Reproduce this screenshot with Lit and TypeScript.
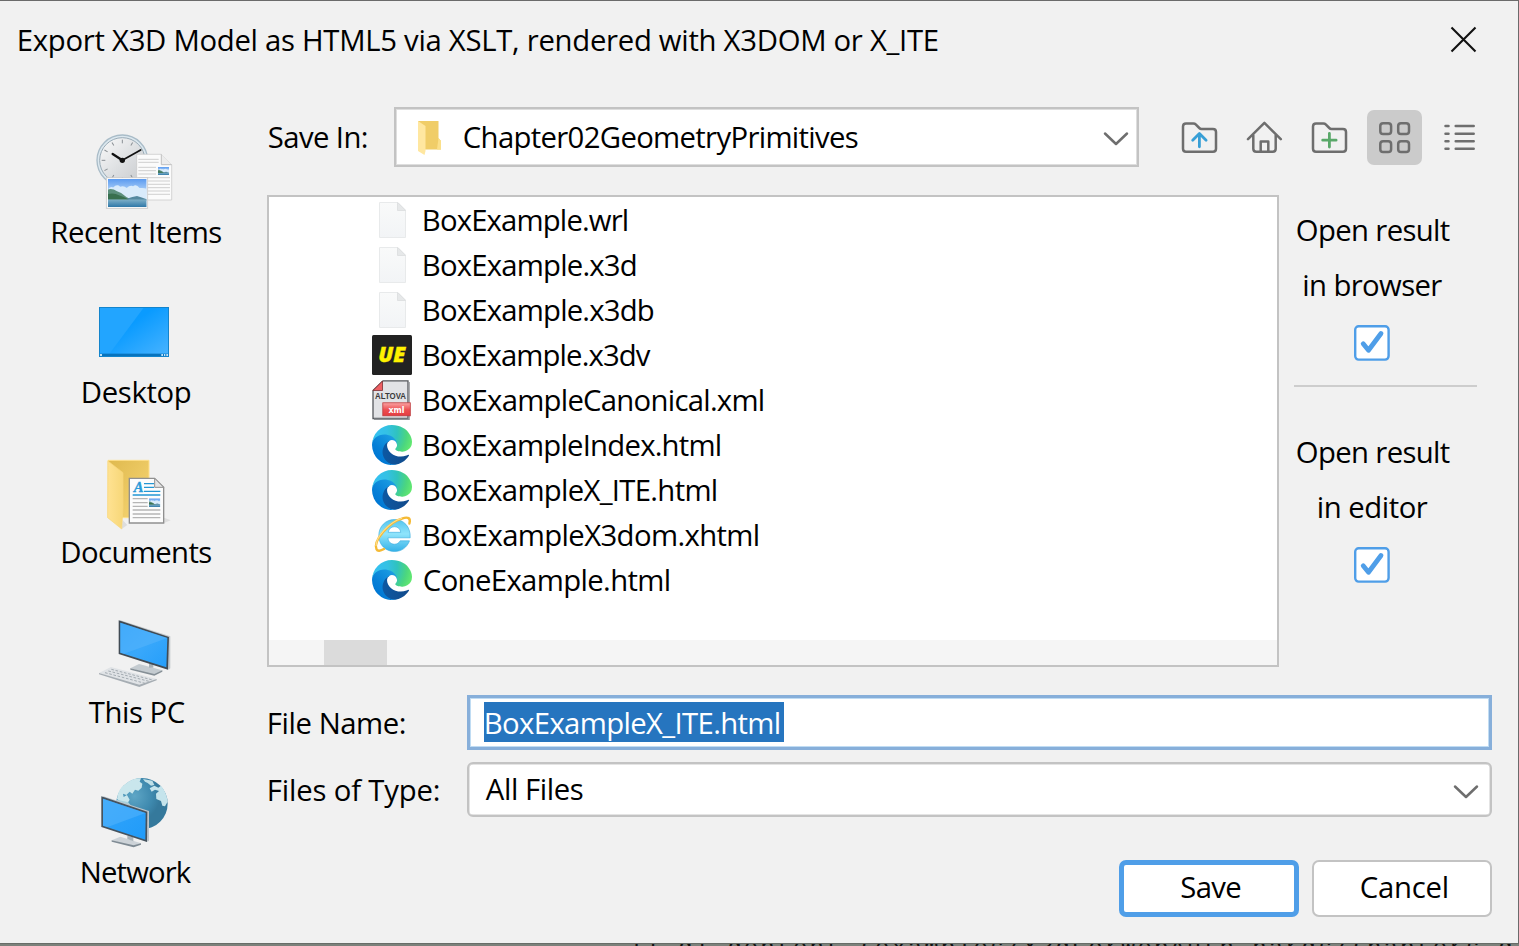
import { LitElement, html, css, svg } from "lit";
import { customElement, property } from "lit/decorators.js";

/** One line of text whose glyphs are spread over a given ink width. */
@customElement("fit-text")
class FitText extends LitElement {
  @property() text = "";
  @property({ type: Number }) w = 100;
  @property({ type: Number }) size = 29.3;
  static styles = css`
    :host { display: inline-block; flex: none; white-space: pre; text-align: left; }
    .run { display: block; white-space: pre; }
  `;
  render() {
    const ctx = document.createElement("canvas").getContext("2d")!;
    ctx.font = `${this.size}px "Open Sans"`;
    const m = ctx.measureText(this.text);
    const ink = m.actualBoundingBoxRight + m.actualBoundingBoxLeft;
    const gap = (this.w - ink) / (this.text.length - 1);
    return html`<span
      class="run"
      style="width:${this.w}px;font-size:${this.size}px;letter-spacing:${gap.toFixed(3)}px;text-indent:${(m.actualBoundingBoxLeft + 0.8).toFixed(2)}px"
      >${this.text}</span>`;
  }
}

const photo = (x: number, y: number, w: number, h: number) => svg`
  <svg x=${x} y=${y} width=${w} height=${h} viewBox="0 0 120 86" preserveAspectRatio="none">
    <defs><linearGradient id="sky" x2="0" y2="1"><stop offset="0" stop-color="#5b9bf0"/><stop offset=".6" stop-color="#cfe6fb"/></linearGradient>
    <linearGradient id="sea" x2="0" y2="1"><stop offset="0" stop-color="#7fb0c8"/><stop offset="1" stop-color="#2f78a8"/></linearGradient></defs>
    <rect width="120" height="86" fill="url(#sky)"/>
    <path d="M0 32Q8 22 16 26Q28 14 38 24Q50 20 58 28Q68 18 78 22Q88 14 98 28Q110 26 120 30V62H0Z" fill="#d9ebfb"/>
    <path d="M0 32Q14 28 28 38Q44 42 58 56L75 64H0Z" fill="#5c8f7c"/>
    <path d="M60 60Q76 54 90 52Q104 56 120 62V66H50Z" fill="#5589a0"/>
    <path d="M0 46Q20 42 34 50Q48 54 66 64H0Z" fill="#39704f"/>
    <rect y="63" width="120" height="23" fill="url(#sea)"/>
  </svg>`;

const recent = svg`
  <defs><linearGradient id="face" x2="1" y2="1"><stop offset="0" stop-color="#fafafa"/><stop offset=".5" stop-color="#dfe1e3"/><stop offset="1" stop-color="#c6c9cc"/></linearGradient></defs>
  <g transform="translate(-1 0) scale(.3333)">
    <circle cx="127" cy="121" r="76" fill="#dce8ef" stroke="#a9bcc8" stroke-width="4"/>
    <circle cx="127" cy="121" r="68" fill="url(#face)" stroke="#9aabb6" stroke-width="3"/>
    ${[0, 30, 60, 90, 120, 150, 180, 210, 240, 270, 300, 330].map(
      (a) => svg`<path d="M127 59V70" stroke="#8b9095" stroke-width="3" transform="rotate(${a} 127 121)"/>`
    )}
    <path d="M127 121L182 90" stroke="#111" stroke-width="5" stroke-linecap="round"/>
    <path d="M127 121L98 102" stroke="#111" stroke-width="7" stroke-linecap="round"/>
    <circle cx="127" cy="121" r="8" fill="#111"/>
    <path d="M170 103H244L275 134V240H170Z" fill="#fbfbfb" stroke="#c5c5c5" stroke-width="2"/>
    <path d="M244 103V134H275" fill="#ececec" stroke="#bfbfbf" stroke-width="3"/>
    <path d="M175 118H236M175 127H236M175 142H228M175 152H228M175 162H228M175 173H270M175 183H270M175 193H270M175 203H270M175 213H270M175 223H270" stroke="#cfcfcf" stroke-width="3"/>
    ${photo(234, 141, 33, 24)}
    <rect x="79" y="173" width="124" height="92" fill="#fafafa" stroke="#cacaca" stroke-width="2.500"/>
    ${photo(84, 177, 116, 84)}
  </g>`;

const desktop = svg`
  <defs><linearGradient id="dk" x2="1" y2="1"><stop offset=".4" stop-color="#0a9bff"/><stop offset="1" stop-color="#4ab4ff"/></linearGradient></defs>
  <g transform="translate(-1 10) scale(.3333)">
    <rect x="58" y="52" width="208" height="148" fill="url(#dk)"/>
    <path d="M58 52H192L88 192H58Z" fill="#22a5ff"/>
    <rect x="58" y="191" width="208" height="9" fill="#0873bd"/>
    <path d="M60 195h6M244 195h5M252 195h4M259 195h5" stroke="#bfe2f8" stroke-width="6"/>
    <rect x="58.500" y="52.500" width="207" height="147" fill="none" stroke="#1384cc" stroke-width="3"/>
  </g>`;

const documents = svg`
  <defs><linearGradient id="fb" x2="1" y2="1"><stop offset="0" stop-color="#dfb94e"/><stop offset="1" stop-color="#f8d775"/></linearGradient>
  <linearGradient id="ff" x2="1" y2="0"><stop offset="0" stop-color="#ffe292"/><stop offset="1" stop-color="#f7d778"/></linearGradient></defs>
  <g transform="translate(9 5) scale(.3333)">
    <path d="M95 252L112 240L98 225Z" fill="#ddd"/><path d="M222 234L242 226L222 218Z" fill="#ddd"/>
    <path d="M54 46H177V218H97L54 218Z" fill="url(#fb)" stroke="#ffe08a" stroke-width="3"/>
    <path d="M54 48L99 83V190L95 252L53 218Z" fill="url(#ff)" stroke="#f8d67b" stroke-width="2"/>
    <path d="M118 100H194L221 127V234H118Z" fill="#fcfcfc" stroke="#909090" stroke-width="4"/>
    <path d="M194 100V127H221Z" fill="#e5e5e5" stroke="#909090" stroke-width="3"/>
    <text x="131" y="140" font-family="Liberation Serif" font-size="44" font-weight="700" font-style="italic" fill="#2a9ad8" stroke="#2a9ad8">A</text>
    <path d="M162 116H192M162 127H192M162 139H211M128 150H211" stroke="#2396d3" stroke-width="4"/>
    <path d="M128 161H173M128 173H173M128 184H173M128 195H211M128 207H211M128 218H211" stroke="#b5b5b5" stroke-width="4"/>
    ${photo(177, 160, 34, 26)}
  </g>`;

const pc = svg`
  <defs><linearGradient id="scr" x2="1" y2="1"><stop offset="0" stop-color="#29a0fa"/><stop offset=".5" stop-color="#39a8fb"/><stop offset="1" stop-color="#259efa"/></linearGradient></defs>
  <g transform="translate(4 5) scale(.3333)">
    <path d="M136 190L162 177L232 196L208 210Z" fill="#c4cbd0"/><path d="M136 190L208 207L232 196V200L208 212L136 194Z" fill="#858f96"/>
    <path d="M192 176H205V188H192Z" fill="#a8b1b7"/>
    <path d="M104 45L256 94V190L250 194Z" fill="#c3c9cd"/>
    <path d="M101 46L252 96L249 194L101 147Z" fill="#414b54"/>
    <path d="M106 53L247 99L244 187L106 143Z" fill="url(#scr)"/>
    <path d="M106 53L247 99L117 146L106 143Z" fill="#57b5fb" opacity=".55"/>
    <path d="M42 204L78 186L215 222L163 243Z" fill="#e0e3e6"/><path d="M42 204L163 239L215 222V226L163 246L42 208Z" fill="#a6adb3"/>
    <path d="M60 203L180 235M70 198L192 229M79 193L203 225" stroke="#a3abb1" stroke-width="3" stroke-dasharray="8 5"/>
  </g>`;

const network = svg`
  <defs><radialGradient id="gl" cx=".35" cy=".35"><stop offset="0" stop-color="#5ea6c6"/><stop offset=".7" stop-color="#3e89ae"/><stop offset="1" stop-color="#35799c"/></radialGradient></defs>
  <g transform="translate(4 5) scale(.3333)">
    <circle cx="171" cy="116" r="77" fill="url(#gl)"/>
    <path d="M96 102Q98 72 122 56Q146 38 168 40L164 50L172 56L170 68L160 77L150 74L142 86L134 80L124 90L114 86L116 96L126 90L134 104L128 114L112 114Z" fill="#c9e6ec"/>
    <path d="M174 42L202 47L208 60L198 62L188 54L180 50Z" fill="#bfe0e8"/>
    <path d="M194 70L208 62L220 68L228 62Q245 82 248 110L240 124L232 122L228 108L214 102L213 86L222 78L210 74L200 80Z" fill="#c5e4ec"/>
    <path d="M96 104L130 112L138 122L96 110Z" fill="#a7d0dd"/>
    <path d="M80 226L106 215L168 235L146 245Z" fill="#cdd3d8"/><path d="M80 226L146 241L168 235V239L146 247L80 230Z" fill="#7f8b94"/>
    <path d="M127 212L145 217V229L127 222Z" fill="#a9b4bb"/>
    <path d="M53 93L192 138V228L184 231Z" fill="#bdc5cb"/>
    <path d="M49 94L187 140L186 231L49 186Z" fill="#46535e"/>
    <path d="M54 101L182 144L181 224L54 182Z" fill="url(#scr2)"/>
    <defs><linearGradient id="scr2" x2="1" y2="1"><stop offset="0" stop-color="#33a5fb"/><stop offset="1" stop-color="#209bf9"/></linearGradient></defs>
    <path d="M54 101L182 144L68 186L54 182Z" fill="#57b5fb" opacity=".5"/>
  </g>`;

const fileIcon = svg`
  <defs><linearGradient id="pg" x2="0" y2="1"><stop offset="0" stop-color="#f9fafa"/><stop offset="1" stop-color="#f2f4f6"/></linearGradient></defs>
  <path d="M7.500 2.500H26L33.500 10V37.500H7.500Z" fill="url(#pg)" stroke="#e8eaeb"/>
  <path d="M25.500 2.500V10.500H33.500Z" fill="#e6e8e9" stroke="#dfe1e2"/>`;

const ueIcon = svg`
  <rect width="40" height="40" rx="1.500" fill="#222"/>
  <text x="6.300" y="27" textLength="27" lengthAdjust="spacingAndGlyphs" font-family="Open Sans" font-weight="800" font-style="italic" font-size="20.500" fill="#fff200" stroke="#fff200" stroke-width=".4">UE</text>`;

const xmlIcon = svg`
  <defs><linearGradient id="xr" x2="0" y2="1"><stop offset="0" stop-color="#fba4a4"/><stop offset=".55" stop-color="#ec4d50"/><stop offset="1" stop-color="#e53c40"/></linearGradient></defs>
  <path d="M11 .8H36V38.500H1V10.500Z" fill="#e2e3e6" stroke="#55585c" stroke-width="1.300"/>
  <path d="M37 2V39.200H2" fill="none" stroke="#8e9195" stroke-width="1.500"/>
  <path d="M10.500 1V10.500H1Z" fill="#ee6064" stroke="#7c3032" stroke-width=".8"/>
  <text x="3" y="18.900" textLength="31" lengthAdjust="spacingAndGlyphs" font-family="Liberation Sans" font-weight="700" font-size="9" fill="#3a3a3a">ALTOVA</text>
  <rect x="10.800" y="22.800" width="27.500" height="13" fill="url(#xr)" stroke="#bd3a3d" stroke-width=".8"/>
  <text x="16.500" y="32.700" textLength="16" lengthAdjust="spacingAndGlyphs" font-family="DejaVu Sans" font-weight="700" font-size="8" fill="#fff">xml</text>`;

const edgeIcon = svg`
  <defs>
    <linearGradient id="ea" x1="63" y1="178" x2="241" y2="178" gradientUnits="userSpaceOnUse"><stop offset="0" stop-color="#0c59a4"/><stop offset="1" stop-color="#114a8b"/></linearGradient>
    <linearGradient id="eb" x1="157" y1="101" x2="46" y2="222" gradientUnits="userSpaceOnUse"><stop offset="0" stop-color="#1b9de2"/><stop offset=".16" stop-color="#1595df"/><stop offset=".67" stop-color="#0680d7"/><stop offset="1" stop-color="#0078d4"/></linearGradient>
    <radialGradient id="ec" cx="30" cy="52" r="245" gradientUnits="userSpaceOnUse"><stop offset="0" stop-color="#35c1f1"/><stop offset=".3" stop-color="#34c1e4"/><stop offset=".55" stop-color="#2fc2c0"/><stop offset=".8" stop-color="#4bd67f"/><stop offset="1" stop-color="#66eb6e"/></radialGradient>
  </defs>
  <g transform="scale(.15625) translate(-4.630 -4.920)">
    <path fill="url(#ea)" d="M235.680 195.460a93.730 93.730 0 0 1-10.540 4.710 101.870 101.870 0 0 1-35.900 6.460c-47.320 0-88.540-32.550-88.540-74.320A31.480 31.480 0 0 1 117.130 105c-42.800 1.800-53.800 46.400-53.800 72.530 0 73.880 68.090 81.370 82.760 81.370 7.910 0 19.840-2.300 27-4.560l1.310-.440A128.340 128.340 0 0 0 241 201.100a4 4 0 0 0-5.320-5.640z"/>
    <path fill="url(#eb)" d="M110.340 246.340A79.200 79.200 0 0 1 87.600 225a80.720 80.720 0 0 1 29.530-120c3.120-1.470 8.450-4.130 15.540-4a32.350 32.350 0 0 1 25.690 13 31.880 31.880 0 0 1 6.360 18.660c0-.210 24.460-79.600-80-79.600-43.900 0-80 41.660-80 78.210a130.150 130.150 0 0 0 12.110 56 128 128 0 0 0 156.380 67.110 75.550 75.550 0 0 1-62.780-8z"/>
    <path fill="url(#ec)" d="M156.940 153.780c-.810 1.050-3.300 2.500-3.300 5.660 0 2.610 1.700 5.120 4.720 7.230 14.380 10 41.490 8.680 41.560 8.680a59.560 59.560 0 0 0 30.270-8.350A61.380 61.380 0 0 0 260.630 114c.260-22.410-8-37.310-11.340-43.910C228.130 28.720 182.480 5 132.630 5a128 128 0 0 0-128 126.200c.480-36.540 36.800-66.050 80-66.050 3.500 0 23.460.340 42 10.070 16.340 8.580 24.900 18.940 30.850 29.210 6.180 10.670 7.280 24.150 7.280 29.520s-2.740 13.330-7.820 19.830z"/>
  </g>`;

const ieIcon = svg`
  <defs><linearGradient id="ie" x2="0" y2="1"><stop offset="0" stop-color="#54c5ee"/><stop offset=".45" stop-color="#8fe4fb"/><stop offset="1" stop-color="#35b2e8"/></linearGradient></defs>
  <path fill-rule="evenodd" fill="url(#ie)" stroke="#35a9de" stroke-width=".6" d="M22.500 4.500C13.500 4.500 6.800 11.500 6.800 20.500C6.800 29.800 13.500 36.500 22.500 36.500C29.500 36.500 35 32.500 37.500 25.800H28.200C27 28 25 29.200 22.500 29.200C18.800 29.200 16.200 26.800 16 22.800H38.200C38.800 12 32 4.500 22.500 4.500ZM16.200 17.300C16.800 13.800 19.200 11.700 22.500 11.700C25.800 11.700 28.300 13.800 28.800 17.300Z"/>
  <path d="M30 3.600C36 1.300 39 3 37.400 8.500M30 3.600C17 7 1 26 4.500 34.200C5.500 36.500 8.500 36 12 34" fill="none" stroke="#f5ba35" stroke-width="2.400" stroke-linecap="round"/>
  <path d="M30 3.200C17 7 4 22 4 31" fill="none" stroke="#ffdf8a" stroke-width="1.100"/>`;

const places = [
  { label: "Recent Items", w: 169, icon: recent },
  { label: "Desktop", w: 108, icon: desktop },
  { label: "Documents", w: 149, icon: documents },
  { label: "This PC", w: 96, icon: pc },
  { label: "Network", w: 110, icon: network },
];

const files = [
  { name: "BoxExample.wrl", w: 203, icon: fileIcon },
  { name: "BoxExample.x3d", w: 212, icon: fileIcon },
  { name: "BoxExample.x3db", w: 230, icon: fileIcon },
  { name: "BoxExample.x3dv", w: 227, icon: ueIcon },
  { name: "BoxExampleCanonical.xml", w: 339, icon: xmlIcon },
  { name: "BoxExampleIndex.html", w: 296, icon: edgeIcon },
  { name: "BoxExampleX_ITE.html", w: 292, icon: edgeIcon },
  { name: "BoxExampleX3dom.xhtml", w: 334, icon: ieIcon },
  { name: "ConeExample.html", w: 245, icon: edgeIcon },
];

const folderOutline = svg`<path d="M14 13.500H21.500Q22.800 13.500 23.700 14.400L27.300 18Q28.200 18.900 29.500 18.900H41Q44 18.900 44 21.900V38.700Q44 41.700 41 41.700H14Q11 41.700 11 38.700V16.500Q11 13.500 14 13.500Z"/>`;

const tools = [
  { on: false, icon: svg`${folderOutline}<path class="up" d="M27.400 36.800V24M20.700 30.200L27.400 23.500L34.100 30.200"/>` },
  { on: false, icon: svg`<path d="M11 29.200L27.400 12.800L43.800 29.200M16.300 25V38.700Q16.300 41.700 19.300 41.700H35.700Q38.700 41.700 38.700 38.700V25M23.700 41.500V31.500H31.300V41.500"/>` },
  { on: false, icon: svg`${folderOutline}<path class="add" d="M27.400 23.500V37M20.700 30.200H34.100"/>` },
  { on: true, icon: svg`<rect x="13.300" y="13.300" width="10.800" height="10.800" rx="2.800"/><rect x="31.200" y="13.300" width="10.800" height="10.800" rx="2.800"/><rect x="13.300" y="31.200" width="10.800" height="10.800" rx="2.800"/><rect x="31.200" y="31.200" width="10.800" height="10.800" rx="2.800"/>` },
  { on: false, icon: svg`<path d="M13.500 16.100H16.500M23.700 16.100H41.700M13.500 23.700H16.500M23.700 23.700H41.700M13.500 31.200H16.500M23.700 31.200H41.700M13.500 38.700H16.500M23.700 38.700H41.700"/>` },
];

const chevron = html`<svg class="chevron" width="26" height="16" viewBox="0 0 26 16"><path d="M2 2.500L13 13L24 2.500" /></svg>`;

const check = html`<svg class="check" width="36" height="36" viewBox="0 0 36 36">
  <rect x="1.200" y="1.200" width="33.400" height="33.400" rx="3.500" fill="#fff" stroke="#4f9ee8" stroke-width="2.400" />
  <path d="M9.200 18.800L14.500 25.300L27 8.500" fill="none" stroke="#4f9ee8" stroke-width="4.800" stroke-linecap="round" stroke-linejoin="round" />
</svg>`;

@customElement("app-root")
class AppRoot extends LitElement {
  static styles = css`
    :host { display: block; width: 1519px; height: 946px; overflow: hidden; font-family: "Open Sans", sans-serif; color: #000; }
    * { box-sizing: border-box; }
    svg { display: block; flex: none; }
    .window { height: 943px; background: #f1f1f1; border-top: 1px solid #6b6b6b; border-right: 1px solid #6b6b6b; }
    .title { display: flex; justify-content: space-between; height: 78px; padding: 0 41px 0 18px; line-height: 79px; }
    .title svg { margin-top: 25px; }
    .body { display: flex; }
    .places { width: 267px; padding: 41px 0 0 5px; }
    .place { display: flex; flex-direction: column; align-items: center; height: 160px; line-height: 41px; }
    .content { width: 1225px; padding-top: 28px; }
    .top { display: flex; height: 60px; line-height: 61px; }
    .top .label { width: 127px; padding-left: 1px; }
    .combo { display: flex; align-items: center; width: 745px; border: 2px solid #c3c3c3; outline: 1px solid #dedede; outline-offset: -3px; background: #fff; padding: 0 8px 0 16px; }
    .combo fit-text { margin-left: 15px; }
    .chevron { margin-left: auto; margin-top: 4px; fill: none; stroke: #6e6e6e; stroke-width: 2.500; stroke-linecap: round; stroke-linejoin: round; }
    .tools { display: flex; gap: 10px; margin: 3px 0 0 33px; }
    .tool { width: 55px; height: 55px; border-radius: 7px; }
    .tool.on { background: #cbcbcb; }
    .tool svg { fill: none; stroke: #6e6e6e; stroke-width: 2.500; stroke-linecap: round; stroke-linejoin: round; }
    .up { stroke: #389fd6; stroke-width: 2.800; }
    .add { stroke: #59a869; stroke-width: 2.800; }
    .middle { display: flex; margin-top: 28px; height: 472px; }
    .list { display: flex; flex-direction: column; width: 1012px; border: 2px solid #c3c3c3; background: #fff; }
    .row { display: flex; height: 45px; padding-left: 103px; line-height: 47px; }
    .row svg { margin: 3px 11px 0 0; }
    .scroll { margin-top: auto; height: 25px; background: #f5f5f5; padding-left: 55px; }
    .thumb { width: 63px; height: 25px; background: #dbdbdb; }
    .options { width: 213px; padding: 8px 15px 0; }
    .option { display: flex; flex-direction: column; align-items: center; padding-right: 26px; line-height: 55px; }
    .check { margin: 12px 1px 0 0; }
    .rule { height: 2px; margin: 24px 0 38px; background: #cdcdcd; }
    .field { display: flex; }
    .field .label { width: 200px; padding-left: 1px; }
    .name { margin-top: 28px; height: 55px; line-height: 56px; }
    .input { display: flex; width: 1025px; border: 3px solid #87afda; outline: 1px solid #c0dcf3; outline-offset: -4px; background: #fff; padding: 4px 0 0 14px; }
    .selected { height: 40px; width: 300px; padding-left: 1px; line-height: 42px; background: #2675bf; color: #fff; }
    .type { margin-top: 12px; height: 55px; line-height: 57px; }
    .select { display: flex; align-items: center; width: 1025px; border: 2px solid #c3c3c3; box-shadow: inset 0 0 0 .500px #c9c9c9; border-radius: 6px; background: #fff; padding: 0 11px 0 16px; }
    .buttons { display: flex; justify-content: flex-end; gap: 13px; margin-top: 43px; }
    .button { display: flex; justify-content: center; width: 180px; height: 57px; padding-left: 2px; border-radius: 7px; background: #fff; border: 2.500px solid #c3c3c3; line-height: 51px; }
    .button.primary { border: 5px solid #4f9ee8; line-height: 45px; }
    .behind { height: 3px; overflow: hidden; background: #7c817b; border-top: 1px solid #686d68; font: 24px/30px "Liberation Mono", monospace; letter-spacing: 2px; color: #111; white-space: pre; padding-left: 629px; }
    .line { display: block; margin-top: -10px; }
  `;

  render() {
    return html`
      <div class="window">
        <div class="title">
          <fit-text text="Export X3D Model as HTML5 via XSLT, rendered with X3DOM or X_ITE" .w=${919}></fit-text>
          <svg width="27" height="27" viewBox="0 0 27 27"><path d="M1.500 1.500L25.500 25.500M25.500 1.500L1.500 25.500" stroke="#111" stroke-width="2.100" fill="none" /></svg>
        </div>
        <div class="body">
          <nav class="places">
            ${places.map((p) => html`<div class="place">
              <svg width="110" height="92" viewBox="0 0 110 92">${p.icon}</svg>
              <fit-text .text=${p.label} .w=${p.w}></fit-text>
            </div>`)}
          </nav>
          <main class="content">
            <div class="top">
              <div class="label"><fit-text text="Save In:" .w=${98}></fit-text></div>
              <div class="combo">
                <svg width="36" height="40" viewBox="0 0 36 40">
                  <path d="M6 4H26.500V21L29 24V32.500H9Z" fill="#f0cd68" />
                  <path d="M26.500 21L29 24V32.500H25Z" fill="#fbe08a" />
                  <path d="M6 4L13.500 9V34L12.500 38L6 34Z" fill="#ffe7a0" />
                </svg>
                <fit-text text="Chapter02GeometryPrimitives" .w=${394}></fit-text>
                ${chevron}
              </div>
              <div class="tools">
                ${tools.map((t) => html`<div class="tool ${t.on ? "on" : ""}"><svg width="55" height="55" viewBox="0 0 55 55">${t.icon}</svg></div>`)}
              </div>
            </div>
            <div class="middle">
              <div class="list">
                ${files.map((f) => html`<div class="row"><svg width="40" height="40" viewBox="0 0 40 40">${f.icon}</svg><fit-text .text=${f.name} .w=${f.w}></fit-text></div>`)}
                <div class="scroll"><div class="thumb"></div></div>
              </div>
              <div class="options">
                <div class="option">
                  <fit-text text="Open result" .w=${153}></fit-text>
                  <fit-text text="in browser" .w=${138}></fit-text>
                  ${check}
                </div>
                <div class="rule"></div>
                <div class="option">
                  <fit-text text="Open result" .w=${153}></fit-text>
                  <fit-text text="in editor" .w=${109}></fit-text>
                  ${check}
                </div>
              </div>
            </div>
            <div class="field name">
              <div class="label"><fit-text text="File Name:" .w=${136}></fit-text></div>
              <div class="input"><div class="selected"><fit-text text="BoxExampleX_ITE.html" .w=${293}></fit-text></div></div>
            </div>
            <div class="field type">
              <div class="label"><fit-text text="Files of Type:" .w=${170}></fit-text></div>
              <div class="select"><fit-text text="All Files" .w=${97}></fit-text>${chevron}</div>
            </div>
            <div class="buttons">
              <div class="button primary"><fit-text text="Save" .w=${59}></fit-text></div>
              <div class="button"><fit-text text="Cancel" .w=${86}></fit-text></div>
            </div>
          </main>
        </div>
      </div>
      <div class="behind"><span class="line">ll di dentent (examples/X3dForWebAuth hards/(hapters d c</span></div>
    `;
  }
}
